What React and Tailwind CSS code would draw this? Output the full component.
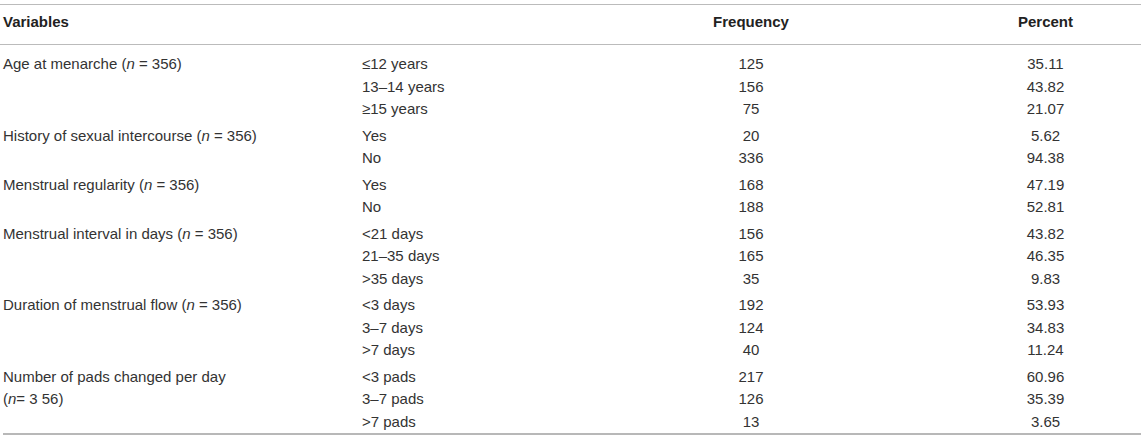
import React from 'react';

const groups = [
  {
    label: (
      <>
        Age at menarche (<i>n</i> = 356)
      </>
    ),
    rows: [
      ['≤12 years', '125', '35.11'],
      ['13–14 years', '156', '43.82'],
      ['≥15 years', '75', '21.07'],
    ],
  },
  {
    label: (
      <>
        History of sexual intercourse (<i>n</i> = 356)
      </>
    ),
    rows: [
      ['Yes', '20', '5.62'],
      ['No', '336', '94.38'],
    ],
  },
  {
    label: (
      <>
        Menstrual regularity (<i>n</i> = 356)
      </>
    ),
    rows: [
      ['Yes', '168', '47.19'],
      ['No', '188', '52.81'],
    ],
  },
  {
    label: (
      <>
        Menstrual interval in days (<i>n</i> = 356)
      </>
    ),
    rows: [
      ['<21 days', '156', '43.82'],
      ['21–35 days', '165', '46.35'],
      ['>35 days', '35', '9.83'],
    ],
  },
  {
    label: (
      <>
        Duration of menstrual flow (<i>n</i> = 356)
      </>
    ),
    rows: [
      ['<3 days', '192', '53.93'],
      ['3–7 days', '124', '34.83'],
      ['>7 days', '40', '11.24'],
    ],
  },
  {
    label: (
      <>
        Number of pads changed per day
        <br />
        (<i>n</i>= 3 56)
      </>
    ),
    rows: [
      ['<3 pads', '217', '60.96'],
      ['3–7 pads', '126', '35.39'],
      ['>7 pads', '13', '3.65'],
    ],
  },
];

export default function App() {
  return (
    <div className="bg-white w-[1145px] h-[438px] pt-[4px] font-['Liberation_Sans',Arial,sans-serif] text-[15px] text-[#333]">
      <div className="w-[1141px] border-t border-[#bbb]">
        {/* header */}
        <div className="flex h-[40px] items-center pb-[4px] border-b border-[#bbb] font-bold text-[#222]">
          <div className="w-[362px] pl-[3px]">Variables</div>
          <div className="w-[290px]"></div>
          <div className="w-[198px] text-center">Frequency</div>
          <div className="w-[100px]"></div>
          <div className="w-[191px] text-center">Percent</div>
        </div>

        {/* body */}
        <div className="pt-[6px] border-b-2 border-[#b8b8b8] ml-[3px]">
          {groups.map((g, gi) => (
            <div key={gi} className="flex py-[2px] last:pb-0 leading-[22.5px]">
              <div className="w-[359px]">{g.label}</div>
              <div className="w-[290px]">
                {g.rows.map((r) => (
                  <div key={r[0]}>{r[0]}</div>
                ))}
              </div>
              <div className="w-[198px] text-center">
                {g.rows.map((r) => (
                  <div key={r[0]}>{r[1]}</div>
                ))}
              </div>
              <div className="w-[100px]"></div>
              <div className="w-[191px] text-center">
                {g.rows.map((r) => (
                  <div key={r[0]}>{r[2]}</div>
                ))}
              </div>
            </div>
          ))}
        </div>
      </div>
    </div>
  );
}
